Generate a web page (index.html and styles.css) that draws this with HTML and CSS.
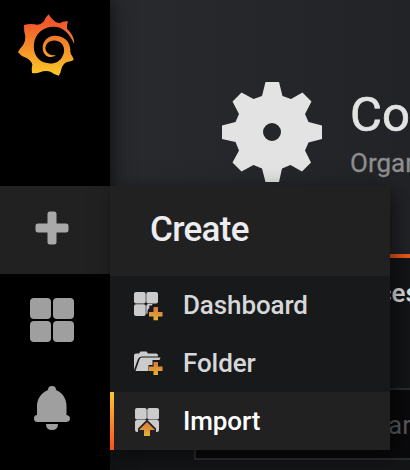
FILE: index.html
```
<!DOCTYPE html>
<html lang="en">
<head>
<meta charset="utf-8">
<title>Configuration</title>
<link rel="stylesheet" href="styles.css">
</head>
<body>
<div class="app">
  <nav class="sidebar">
    <div class="logo">
      <svg width="60" height="66" viewBox="48 39 180 198">
        <defs><linearGradient id="flame" x1="0" y1="0" x2="0" y2="1"><stop offset=".15" stop-color="#f05a2b"/><stop offset="1" stop-color="#fbca28"/></linearGradient></defs>
        <path fill="url(#flame)" d="M223 132C223 114 215 99 201 86Q199 78 204 64Q190 62 179 70Q167 69 160 60Q151 53 146 43Q138 49 132 64Q124 73 112 74Q90 70 72 75Q71 93 76 109Q77 124 69 136Q59 146 54 157Q63 169 78 173Q92 179 97 193Q94 207 96 219Q108 221 120 217Q137 210 153 216Q164 225 176 227Q182 220 184 208Q188 191 201 186Q213 185 221 180Q219 170 213 163Q210 158 211 150C210 123 191 107 165 107C142 107 128 124 128 143C128 160 139 171 153 171Q165 170 168 165Q155 168 147 162C135 155 133 141 142 130C152 119 173 119 184 130C195 141 195 160 185 173C173 191 151 194 131 187C109 178 99 156 102 132C105 101 130 80 161 80C188 80 207 98 223 132Z"/>
      </svg>
    </div>
    <div class="side-item active">
      <svg width="34" height="34" viewBox="0 0 34 34"><path d="M15 0.5h4q2.500 0 2.500 2.500v9.500H31q2.500 0 2.500 2.500v4q0 2.500-2.500 2.500h-9.500V31q0 2.500-2.500 2.500h-4q-2.500 0-2.500-2.500v-9.500H3Q.5 21.500.5 19v-4Q.5 12.500 3 12.500h9.500V3Q12.500.5 15 .5Z"/></svg>
    </div>
    <div class="side-item">
      <svg width="44" height="44" viewBox="0 0 44 44"><rect width="21" height="21" rx="4"/><rect x="23" width="21" height="21" rx="4"/><rect y="23" width="21" height="21" rx="4"/><rect x="23" y="23" width="21" height="21" rx="4"/></svg>
    </div>
    <div class="side-item">
      <svg width="36" height="44" viewBox="0 0 36 44"><path d="M14 4Q14 0 18 0T22 4C29 7 32.500 13 32.500 20V29Q36 29.500 36 32.500T32.500 36h-29Q0 36 0 32.500T3 29V20C3 13 7 7 14 4ZM12 38h12q0 6-6 6t-6-6Z"/></svg>
    </div>
  </nav>
  <main class="page">
    <header class="page-header">
      <svg class="gear" width="100" height="100" viewBox="0 0 100 100"><path fill-rule="evenodd" d="M43.500 0h13.500l3.500 14 8.500 3L80.500 10.500l9 9L83 32l3.500 8L100 43.500V57l-13.500 3.500L83 68.500l6 12-9 9L68.500 83l-8.500 3.500L57 100H43.500L40 86.500 31.500 83l-12 6.500-9-9L17 68.500 13.500 60 0 57V43.500L13.500 40l3.500-8-6.500-12.500 9-9L31.500 17l8.500-3ZM50 41a9 9 0 1 0 0 18a9 9 0 0 0 0-18Z"/></svg>
      <div class="titles">
        <h1>Con</h1>
        <div class="org">Organ</div>
      </div>
    </header>
    <div class="tabs">ces</div>
    <div class="search">ar</div>
  </main>
  <section class="menu">
    <h2>Create</h2>
    <a class="menu-item">
      <svg width="30" height="30" viewBox="0 0 30 30">
        <defs><linearGradient id="add" x1="0" y1="0" x2="0" y2="1"><stop stop-color="#dc7442"/><stop offset="1" stop-color="#e3b32e"/></linearGradient></defs>
        <rect width="11.700" height="11.500" rx="2"/><rect x="12.300" width="11.700" height="11.500" rx="2"/><rect y="12.200" width="11.700" height="11.800" rx="2"/><path d="M12.300 14q0-2 2-2h4v1.500h-3v3.300H14v5h-1.700Z"/>
        <path fill="#18191b" d="M18 13.500h10V19h2v10H13.500V18.500H18Z"/>
        <path fill="url(#add)" d="M19.500 15h4.500v5h4.500v4.500H24v3.800h-4.500v-3.800H15V20h4.500Z"/>
      </svg>
      <span>Dashboard</span>
    </a>
    <a class="menu-item">
      <svg width="30" height="30" viewBox="0 0 30 30">
        <path d="M0 20V5.500Q0 3.500 2 3.500h3l1.500-2h6l1.500 2h8q2 0 2 2v1H8Q5 6.500 4 9L0 20ZM8 7.500h18.500l-1 2.500h-7v5h-4v6H1.500L5.500 9.500Q6 7.500 8 7.500Z"/>
        <path fill="url(#add)" d="M19.500 12h4.500v4.500h4.500V21H24v4h-4.500v-4H15v-4.500h4.500Z"/>
      </svg>
      <span>Folder</span>
    </a>
    <a class="menu-item selected">
      <svg width="30" height="30" viewBox="-1 0 30 30">
        <rect width="11.700" height="11.500" rx="2"/><rect x="12.300" width="11.700" height="11.500" rx="2"/><path d="M0 14q0-2 2-2h9.500L3 20.500V24H2q-2 0-2-2ZM24 14q0-2-2-2h-9.500L21 20.500V24h1q2 0 2-2Z"/>
        <path fill="url(#add)" d="M12 14l8 8h-5v6H9v-6H4Z"/>
      </svg>
      <span>Import</span>
    </a>
  </section>
</div>
</body>
</html>
```
FILE: styles.css
```
* { box-sizing: border-box; }
body { margin: 0; background: #141517; font-family: Roboto, "Liberation Sans", sans-serif; }
svg { display: block; flex: none; }
.app { display: flex; position: relative; width: 410px; height: 470px; overflow: hidden; }
.sidebar { width: 110px; flex: none; background: #000; box-shadow: 0 0 20px #0b0c0e; z-index: 1; }
.logo { height: 186px; padding: 13px 0 0 16px; }
.side-item { height: 88px; padding-right: 6px; display: flex; align-items: center; justify-content: center; fill: #9f9f9f; }
.side-item + .side-item { padding-top: 4px; }
.side-item.active { background: #212121; padding: 0 6px 4px 0; fill: #a9a9a9; }
.page { flex: 1; min-width: 0; overflow: hidden; white-space: nowrap; background: #141517; }
.page-header { height: 254px; padding: 82px 0 0 112px; display: flex; gap: 28px; background: linear-gradient(90deg, #292a2e, #222327); }
.gear { fill: #e3e3e3; }
h1 { margin: 4px 0 0; font-size: 49px; line-height: 58px; font-weight: 400; color: #e3e3e3; -webkit-text-stroke: .7px #e3e3e3; }
.org { margin-top: 3px; font-size: 26px; line-height: 32px; color: #8e8e8e; -webkit-text-stroke: .3px #8e8e8e; }
.tabs { height: 134px; border-top: 4px solid #f05a20; padding: 19px 0 0 268px; font-size: 26px; line-height: 32px; font-weight: 500; color: #e3e4e5; }
.search { height: 72px; margin: 0 -10px 0 84px; border: 2px solid #2c2c2e; background: #0a0a0c; color: #5b5c5e; font-size: 26px; line-height: 70px; padding-left: 192px; }
.menu { position: absolute; z-index: 2; left: 110px; top: 186px; width: 280px; height: 264px; background: #18191b; box-shadow: 5px 5px 20px rgba(0, 0, 0, .55); }
.menu h2 { margin: 0; height: 90px; padding-left: 40px; background: #212121; color: #ececf1; font-size: 35px; line-height: 88px; font-weight: 500; letter-spacing: -.7px; }
.menu-item { height: 58px; display: flex; align-items: center; gap: 19px; padding-left: 24px; color: #d6d7d8; fill: #cbcbcb; font-size: 26px; font-weight: 500; letter-spacing: -.1px; }
.menu-item svg { margin-top: 3px; }
.menu-item.selected { background: #212121; color: #fff; border-left: 4px solid; border-image: linear-gradient(#fbca2d, #ff4b21) 1; padding-left: 20px; }
```
